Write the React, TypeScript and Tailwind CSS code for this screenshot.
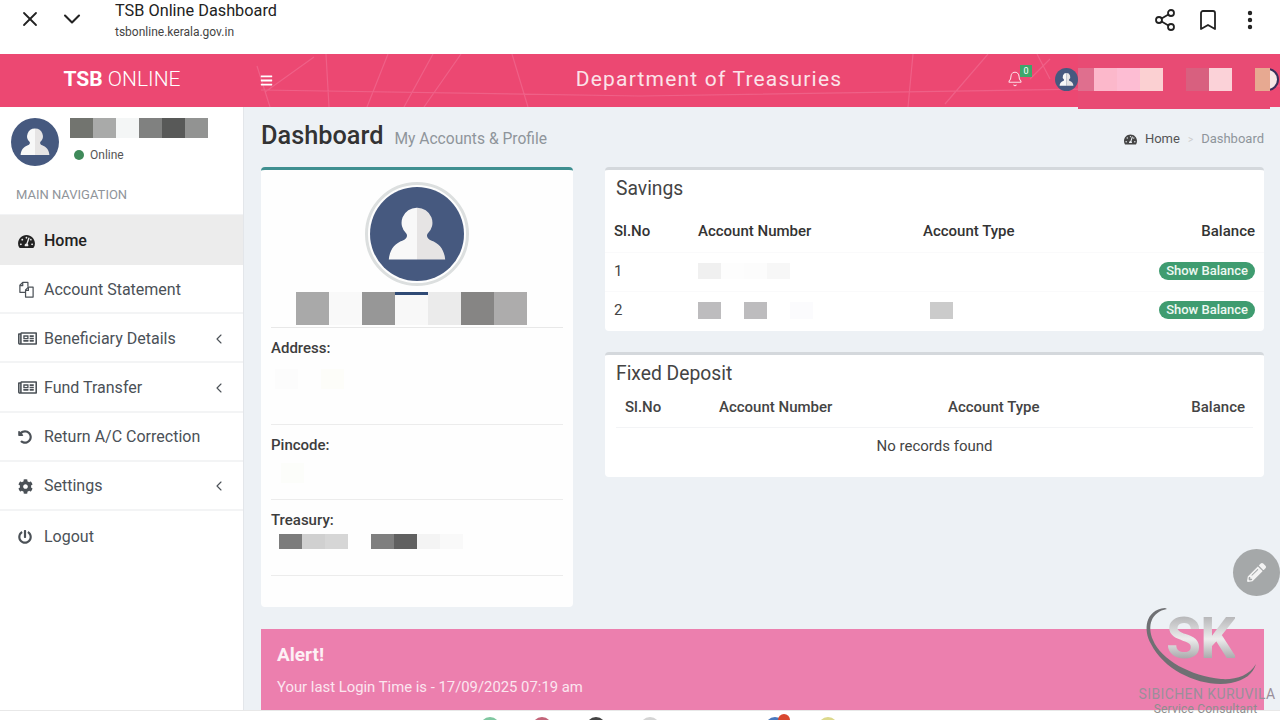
import React from 'react'
import { Bell, Bookmark, ChevronDown, ChevronLeft, EllipsisVertical, Share2, X } from 'lucide-react'
import { FaBars, FaCog, FaPencilAlt, FaPowerOff, FaRegNewspaper, FaTachometerAlt, FaUndoAlt } from 'react-icons/fa'

const Avatar = ({ className }: { className: string }) => (
  <svg viewBox="0 0 100 100" className={className}>
    <circle cx="50" cy="50" r="50" fill="#46597f" />
    <path d="M50 22a16 16 0 0 0-11 28c1 3 0 5-4 7-9 3-14 10-15 20h30z" fill="#f8f8f8" />
    <path d="M50 22a16 16 0 0 1 11 28c-1 3 0 5 4 7 9 3 14 10 15 20H50z" fill="#e6e4e4" />
  </svg>
)

const FilesIcon = () => (
  <svg viewBox="0 0 18 18" className="h-[17px] w-[17px]" fill="none" stroke="currentColor" strokeWidth="1.3" strokeLinejoin="round">
    <path d="M8 17h8V6.5h-5L8 9.5z" />
    <path d="M7.5 12H2V4.5L5 1.5h5.5v4.5" />
    <path d="M5 1.5V5H2M11 6.5V10H8" />
  </svg>
)

// blurred-out personal details are rows of grey tiles
const Tiles = ({ colors, size }: { colors: string[]; size: string }) => (
  <div className="flex">
    {colors.map((c, i) => (
      <div key={i} className={size} style={{ background: c }} />
    ))}
  </div>
)

const navItems = [
  { label: 'Account Statement', icon: <FilesIcon />, arrow: false },
  { label: 'Beneficiary Details', icon: <FaRegNewspaper className="h-[17px] w-[19px]" />, arrow: true },
  { label: 'Fund Transfer', icon: <FaRegNewspaper className="h-[17px] w-[19px]" />, arrow: true },
  { label: 'Return A/C Correction', icon: <FaUndoAlt className="h-[14px] w-[14px]" />, arrow: false },
  { label: 'Settings', icon: <FaCog className="h-[15px] w-[15px]" />, arrow: true },
  { label: 'Logout', icon: <FaPowerOff className="h-[14px] w-[14px]" />, arrow: false },
]

const Sidebar = () => (
  <aside className="w-[244px] shrink-0 border-r border-[#e3e6ea] bg-white">
    <div className="flex h-[71px] pl-[11px] pt-[11px]">
      <Avatar className="h-[48px] w-[48px]" />
      <div className="ml-[11px]">
        <Tiles size="h-[20px] w-[23px]" colors={['#72746f', '#a9aaa9', '#f4f6f6', '#808180', '#585958', '#929392']} />
        <div className="ml-[4px] mt-[8px] flex items-center text-[12px] text-[#555]">
          <span className="mr-[6px] h-[10px] w-[10px] rounded-full bg-[#3f8a5a]" />
          Online
        </div>
      </div>
    </div>
    <div className="flex h-[37px] items-center border-b border-[#f2f3f5] pl-4 pb-[3px] text-[13px] text-[#8f949a]">MAIN NAVIGATION</div>
    <div className="flex h-[50px] items-center bg-[#ececec] pl-[18px] pt-[2px] text-[16px] font-medium text-[#222]">
      <span className="flex w-[26px] items-center">
        <FaTachometerAlt className="h-[15px] w-[17px]" />
      </span>
      Home
    </div>
    {navItems.map(item => (
      <div key={item.label} className="flex h-[49.2px] items-center border-b-2 border-[#f3f4f5] pl-[18px] pr-[16px] pt-[2px] text-[16px] text-[#4b5157] last:border-b-0">
        <span className="flex w-[26px] items-center">{item.icon}</span>
        <span className="flex-1">{item.label}</span>
        {item.arrow && <ChevronLeft className="h-4 w-4" strokeWidth={1.7} />}
      </div>
    ))}
  </aside>
)

const ProfileField = ({ label, height, children }: { label: string; height: string; children?: React.ReactNode }) => (
  <div className={`${height} border-b border-[#ececec] pt-[10px]`}>
    <div className="text-[15px] font-medium leading-5 text-[#3d3d3d]">{label}</div>
    {children}
  </div>
)

const ProfileCard = () => (
  <div className="h-[440px] w-[312px] shrink-0 rounded-sm border-t-[3px] border-[#3f8f90] bg-[#fefefe] px-[10px]">
    <div className="flex justify-center pt-[12px]">
      <div className="rounded-full border-[3px] border-[#dcdfdf] p-[2px]">
        <Avatar className="h-[94px] w-[94px]" />
      </div>
    </div>
    <div className="relative mt-[5px] flex h-[37px] items-end border-b border-[#e8e8e8] pb-[2px] pl-[25px]">
      <Tiles size="h-[33px] w-[33px]" colors={['#a9a9a9', '#f9f9f9', '#979797', '#f8f8f8', '#ebebeb', '#868584', '#adacac']} />
      <div className="absolute left-[124px] top-[1px] h-[3px] w-[33px] bg-[#2f4a75]" />
    </div>
    <ProfileField label="Address:" height="h-[97px]">
      <div className="ml-[4px] mt-[11px]">
        <Tiles size="h-[20px] w-[23px]" colors={['#fcfcfc', '#fefefe', '#fdfdf9', '#fefefe', '#fefefe']} />
      </div>
    </ProfileField>
    <ProfileField label="Pincode:" height="h-[75px]">
      <div className="ml-[10px] mt-[8px] h-[20px] w-[23px] bg-[#fcfdfa]" />
    </ProfileField>
    <ProfileField label="Treasury:" height="h-[76px]">
      <div className="ml-[8px] mt-[4px] flex gap-[23px]">
        <Tiles size="h-[15px] w-[23px]" colors={['#7c7c7c', '#d0d0d0', '#d6d6d6']} />
        <Tiles size="h-[15px] w-[23px]" colors={['#7f7f7f', '#606060', '#f4f4f4', '#f9f9f9']} />
      </div>
    </ProfileField>
  </div>
)

const ShowBalance = () => (
  <span className="rounded-[9px] bg-[#3f9c70] px-[7px] py-[1px] text-[13px] font-medium leading-[16px] text-[#eef8f2]">Show Balance</span>
)

const SavingsRow = ({ no, tiles, typeTile }: { no: string; tiles: React.ReactNode; typeTile?: React.ReactNode }) => (
  <div className="flex h-[39px] items-center border-t border-[#fafafb] pb-[2px] pl-[9px] pr-[9px] text-[15px] text-[#444]">
    <span className="w-[84px]">{no}</span>
    <span className="w-[232px]">{tiles}</span>
    <span className="flex-1">{typeTile}</span>
    <ShowBalance />
  </div>
)

const Savings = () => (
  <div className="h-[164px] rounded-sm border-t-[3px] border-[#d4d8dc] bg-white">
    <div className="pl-[11px] pt-[7px] text-[19.3px] leading-[24px] text-[#444]">Savings</div>
    <div className="flex h-[51px] items-center pl-[9px] pr-[9px] pt-[10px] text-[15px] font-medium text-[#333]">
      <span className="w-[84px]">Sl.No</span>
      <span className="w-[225px]">Account Number</span>
      <span className="flex-1">Account Type</span>
      <span>Balance</span>
    </div>
    <SavingsRow no="1" tiles={<Tiles size="h-[16px] w-[23px]" colors={['#f0f0f0', '#fdfdfd', '#fcfcfc', '#f7f7f7']} />} />
    <SavingsRow
      no="2"
      tiles={<Tiles size="h-[17px] w-[23px]" colors={['#bdbcbe', '#ffffff', '#bdbcbe', '#ffffff', '#fbfbfd']} />}
      typeTile={<div className="h-[17px] w-[23px] bg-[#cbcbcb]" />}
    />
  </div>
)

const FixedDeposit = () => (
  <div className="h-[125px] rounded-sm border-t-[3px] border-[#d4d8dc] bg-white px-[11px]">
    <div className="pt-[7px] text-[19.3px] leading-[24px] text-[#444]">Fixed Deposit</div>
    <div className="flex h-[42px] items-center border-b border-[#f3f4f6] pl-[9px] pr-[8px] pt-[2px] text-[15px] font-medium text-[#444]">
      <span className="w-[94px]">Sl.No</span>
      <span className="w-[229px]">Account Number</span>
      <span className="flex-1">Account Type</span>
      <span>Balance</span>
    </div>
    <div className="flex h-[37px] items-center justify-center text-[15px] text-[#444]">No records found</div>
  </div>
)

export default function App() {
  return (
    <div className="relative flex h-[720px] w-[1280px] flex-col overflow-hidden bg-white font-['Roboto',sans-serif]">
      {/* Browser bar */}
      <div className="flex h-[54px] shrink-0 items-start text-[#222]">
        <X className="ml-[18px] mt-[7px] h-6 w-6" strokeWidth={1.8} />
        <ChevronDown className="ml-[16px] mt-[5px] h-7 w-7" strokeWidth={1.8} />
        <div className="ml-[29px] flex-1">
          <div className="text-[16.3px] leading-[21px]">TSB Online Dashboard</div>
          <div className="mt-[3px] text-[12px] leading-[16px] text-[#444]">tsbonline.kerala.gov.in</div>
        </div>
        <Share2 className="mr-[19px] mt-[8px] h-6 w-6" strokeWidth={1.8} />
        <Bookmark className="mr-[18px] mt-[8px] h-6 w-6" strokeWidth={1.8} />
        <EllipsisVertical className="mr-[18px] mt-[8px] h-6 w-6" strokeWidth={2.4} />
      </div>

      {/* Pink header */}
      <header className="relative flex h-[53px] shrink-0 items-center bg-[#ec4872] pb-[1px] text-white">
        <svg className="absolute inset-0 h-full w-full" viewBox="0 0 1280 53" fill="none" stroke="#ef6087" strokeWidth="1.2">
          <path d="M261 36 640 42 1280 32M257 12 270 53M326 0 329 53M314 3 265 38M388 0 367 53M433 0 404 53M461 0 424 53M512 0 528 53M913 0 908 53M988 0 945 50M1037 0 1050 25M1050 5 1030 25" />
        </svg>
        <div className="relative w-[244px] text-center text-[21px]">
          <span className="font-bold">TSB</span> <span className="font-light">ONLINE</span>
        </div>
        <FaBars className="relative ml-[16px] h-[13px] w-[13px]" />
        <div className="relative flex-1 pr-[135px] text-center text-[21px] tracking-[1.2px] text-[#fbe3e9]">Department of Treasuries</div>
        <div className="absolute left-[1007px] top-[17px]">
          <Bell className="h-[16px] w-[16px] text-[#fbdde5]" strokeWidth={1.6} />
          <span className="absolute -right-[9px] -top-[6px] flex h-[12px] w-[12px] items-center justify-center bg-[#3da76b] text-[9px] leading-none">0</span>
        </div>
        <div className="absolute left-[1078px] top-0 h-[55px] w-[192px] bg-[#e84b74]" />
        <div className="absolute left-[1256px] top-[14px] h-[23px] w-[23px] rounded-full border-2 border-[#3b2f5c] bg-[#f8e6e6]" />
        <div className="absolute left-[1055px] top-[14px] flex items-center">
          <Avatar className="h-[23px] w-[23px]" />
          <div className="flex">
            <div className="h-[23px] w-[16px] bg-[#df6f8e]" />
            <Tiles size="h-[23px] w-[23px]" colors={['#fcb8cb', '#fdbdd3', '#fbd0d2', '#e84b74', '#d8607f', '#fbd2d8', '#e84b74']} />
            <div className="h-[23px] w-[15px] bg-[#e7a991]" />
          </div>
        </div>
      </header>

      <div className="flex min-h-0 flex-1">
        <Sidebar />
        <main className="min-w-0 flex-1 bg-[#edf1f5] pl-[17px] pr-[16px]">
          <div className="flex h-[60px] items-center justify-between pb-[2px]">
            <div className="flex items-baseline">
              <h1 className="text-[25.3px] font-medium text-[#333]">Dashboard</h1>
              <span className="ml-[11px] text-[15.6px] text-[#8f959b]">My Accounts &amp; Profile</span>
            </div>
            <div className="flex items-center pt-[6px] text-[13px] text-[#8f959b]">
              <FaTachometerAlt className="mr-[8px] h-[13px] w-[13px] text-[#444]" />
              <span className="text-[#555]">Home</span>
              <span className="mx-[8px] text-[10px] text-[#ccc]">&gt;</span>
              Dashboard
            </div>
          </div>
          <div className="flex gap-[32px]">
            <ProfileCard />
            <div className="flex-1 space-y-[21px]">
              <Savings />
              <FixedDeposit />
            </div>
          </div>
          <div className="mt-[22px] h-[81px] bg-[#ec7fae] pl-[16px] pt-[15px] text-[#fbe6f0]">
            <div className="text-[19px] font-bold leading-[22px] text-[#fdf0f5]">Alert!</div>
            <div className="mt-[11px] text-[14.85px] leading-[20px]">Your last Login Time is - 17/09/2025 07:19 am</div>
          </div>
        </main>
      </div>

      {/* Dock icons peeking in at the bottom edge */}
      <div className="flex h-[10px] shrink-0 overflow-hidden border-t border-[#e8e8e8] pt-[6px]">
        <div className="ml-[480px] h-5 w-5 rounded-full bg-[#7fc7a0]" />
        <div className="ml-[32px] h-5 w-5 rounded-full bg-[#c3657a]" />
        <div className="ml-[34px] h-5 w-5 rounded-full bg-[#444]" />
        <div className="ml-[34px] h-5 w-5 rounded-full bg-[#d4d4d4]" />
        <div className="ml-[105px] h-5 w-5 rounded-full bg-[#4a78bd]" />
        <div className="-ml-[7px] -mt-[3px] h-3 w-3 rounded-full bg-[#d9482f]" />
        <div className="ml-[28px] h-5 w-5 rounded-full bg-[#dcd98c]" />
      </div>

      {/* Edit button */}
      <div className="absolute left-[1233px] top-[549px] flex h-[47px] w-[47px] items-center justify-center rounded-full bg-[#a5a8a9]">
        <FaPencilAlt className="h-[19px] w-[19px] text-[#f3f3f3]" />
      </div>

      {/* Watermark */}
      <div className="absolute left-[1137px] top-[606px] h-[112px] w-[143px] text-center">
        <svg className="absolute left-0 top-0 h-[90px] w-[143px]" viewBox="0 0 143 90">
          <path d="M28 2C8 4 6 24 14 38 28 66 66 82 94 77 108 74 116 68 119 58 112 70 98 74 84 73 54 70 24 54 16 34 10 20 14 6 30 3Z" fill="#6f7073" />
        </svg>
        <div className="absolute left-[29px] top-[-2px] bg-gradient-to-b from-[#9a9a9d] via-[#ededed] to-[#77777a] bg-clip-text text-[57px] font-bold leading-[70px] tracking-[-1px] text-transparent">SK</div>
        <div className="absolute -left-[3px] w-[146px] top-[80px] whitespace-nowrap text-[14px] leading-4 tracking-[0.4px] text-[#9a8f9a]">SIBICHEN KURUVILA</div>
        <div className="absolute inset-x-0 top-[97px] whitespace-nowrap pr-[6px] text-[12px] leading-[13px] tracking-[0.2px] text-[#8e8e8e]">Service Consultant</div>
      </div>
    </div>
  )
}
